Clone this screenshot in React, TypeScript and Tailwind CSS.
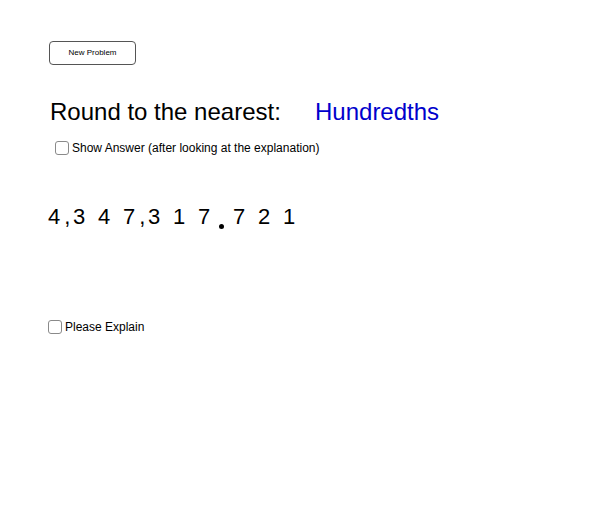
import React from "react";

const Check = () => (
  <span className="inline-block w-[14px] h-[14px] rounded-[3px] border-[1.5px] border-[#8a8a8a] bg-white shrink-0" />
);

export default function App() {
  const cells: { d: string; w: number; comma?: boolean; dot?: boolean }[] = [
    { d: "4", w: 25, comma: true },
    { d: "3", w: 25 },
    { d: "4", w: 25 },
    { d: "7", w: 25, comma: true },
    { d: "3", w: 25 },
    { d: "1", w: 25 },
    { d: "7", w: 35, dot: true },
    { d: "7", w: 25 },
    { d: "2", w: 25 },
    { d: "1", w: 25 },
  ];
  return (
    <div className="w-[610px] h-[525px] bg-white flex flex-col text-black" style={{ fontFamily: '"Liberation Sans", Arial, sans-serif' }}>
      <button className="mt-[41px] ml-[49px] w-[87px] h-[24px] rounded-[4px] border border-[#555] bg-white text-[8px] leading-none flex items-center justify-center">
        New Problem
      </button>
      <div className="mt-[35px] ml-[50px] flex h-[24px] text-[24px] leading-[24px]">
        <span className="w-[265px]">Round to the nearest:</span>
        <span className="text-[#0000cc]">Hundredths</span>
      </div>
      <div className="mt-[17px] ml-[55px] flex items-center h-[14px] gap-[3px] text-[12px] leading-[14px]">
        <Check />
        <span>Show Answer (after looking at the explanation)</span>
      </div>
      <div className="mt-[51px] ml-[48px] flex h-[22px] text-[22px] leading-[22px]">
        {cells.map((c, i) => (
          <div key={i} className="flex items-start" style={{ width: c.w }}>
            <span>{c.d}</span>
            {c.comma && <span className="ml-[4px]">,</span>}
            {c.dot && <span className="ml-[9px] mt-[18px] w-[5px] h-[5px] rounded-full bg-black" />}
          </div>
        ))}
      </div>
      <div className="mt-[92px] ml-[48px] flex items-center h-[14px] gap-[3px] text-[12px] leading-[14px]">
        <Check />
        <span>Please Explain</span>
      </div>
    </div>
  );
}
